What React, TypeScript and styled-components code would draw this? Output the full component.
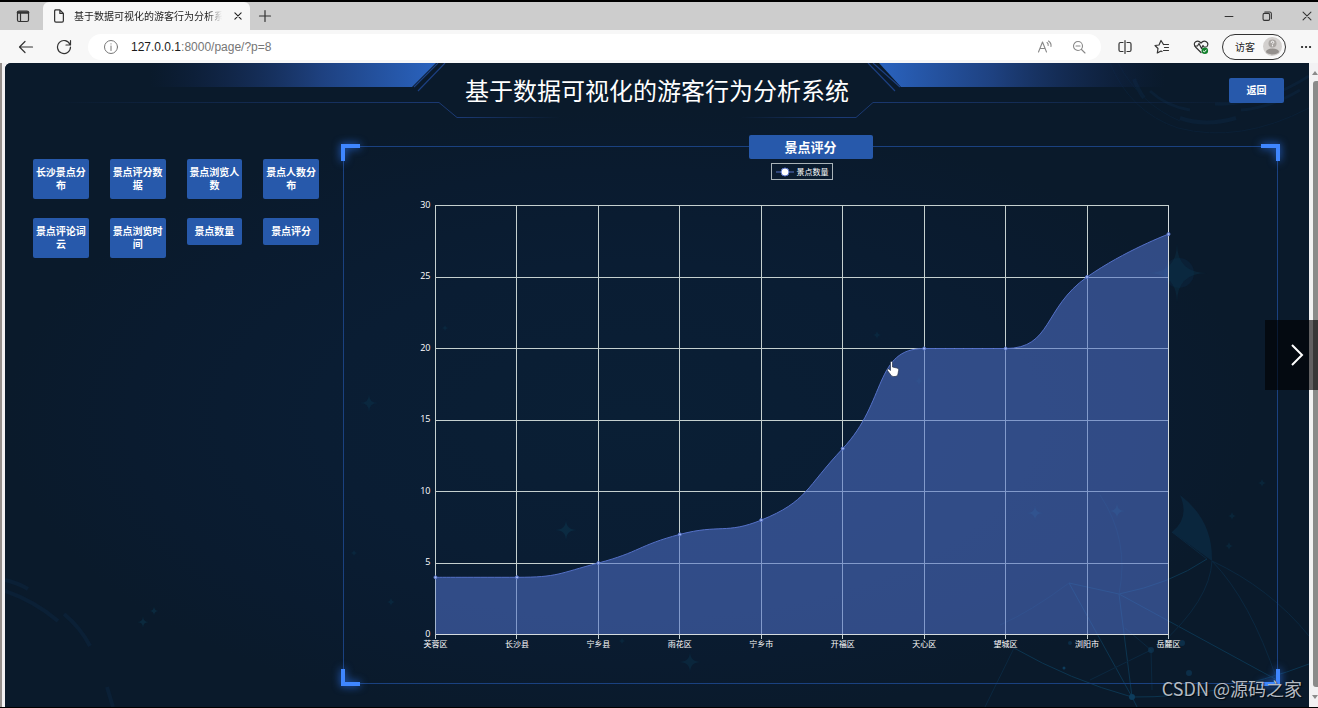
import React from "react";
import styled, { createGlobalStyle } from "styled-components";

const GlobalStyle = createGlobalStyle`
  *, *::before, *::after { box-sizing: border-box; }
  body {
    margin: 0;
    background: #000;
    font-family: "Open Sans", "Noto Sans CJK SC", sans-serif;
  }
  button { font-family: inherit; cursor: pointer; }
`;

/* ---------- browser window ---------- */

const Window = styled.div`
  position: relative;
  min-height: 100vh;
  display: flex;
  flex-direction: column;
  padding: 2px 0 1px;
  overflow: hidden;
`;

const TabStrip = styled.div`
  display: flex;
  align-items: stretch;
  height: 28px;
  padding-left: 2px;
  background: #cdcdcd;
`;

const IconButton = styled.button<{ $width: number }>`
  display: flex;
  align-items: center;
  justify-content: center;
  flex: none;
  width: ${(p) => p.$width}px;
  padding: 0;
  border: 0;
  background: transparent;
  color: #2b2b2b;
`;

const WindowControls = styled.div`
  display: flex;

  button:last-child {
    margin-left: 10px;
  }
`;

const Tab = styled.div`
  display: flex;
  align-items: center;
  gap: 8px;
  width: 207px;
  padding: 0 4px 0 9px;
  border-radius: 6px 6px 0 0;
  background: #f7f7f7;
`;

const TabTitle = styled.span`
  flex: 1;
  overflow: hidden;
  white-space: nowrap;
  font-size: 10px;
  line-height: 14px;
  color: #1c1c1c;
  mask-image: linear-gradient(to right, #000 90%, transparent);
`;

const Spacer = styled.div`
  flex: 1;
`;

const Toolbar = styled.div`
  display: flex;
  align-items: center;
  height: 33px;
  padding-left: 7px;
  background: #f7f7f7;
`;

const AddressBar = styled.div`
  display: flex;
  flex: 1;
  align-items: center;
  height: 26px;
  margin: 0 5px;
  padding: 0 5px 0 15px;
  border-radius: 13px;
  background: #fff;
`;

const Url = styled.div`
  flex: 1;
  padding-left: 12px;
  font-family: "Liberation Sans", sans-serif;
  font-size: 12px;
  line-height: 16px;
  color: #767676;

  b {
    font-weight: 400;
    color: #1c1c1c;
  }
`;

const Profile = styled.button`
  display: flex;
  align-items: center;
  justify-content: space-between;
  width: 64px;
  height: 26px;
  margin-right: 8px;
  padding: 0 3px 0 12px;
  border: 1px solid #333;
  border-radius: 13px;
  background: #f9f9f9;
  color: #1c1c1c;
  font-size: 10px;
  line-height: 14px;
`;

const Viewport = styled.div`
  display: flex;
  flex: 1;
  border-left: 2px solid #96908d;
  background: #f2f1f3;
`;

const ScrollTrack = styled.div`
  display: flex;
  flex-direction: column;
  align-items: flex-end;
  justify-content: space-between;
  width: 9px;
  padding: 7px 0;
`;

const ScrollThumb = styled.div`
  flex: 1;
  width: 5px;
  margin: 5px 0 7px;
  border-radius: 3px 0 0 3px;
  background: #8a8a8a;
`;

/* ---------- dashboard ---------- */

const Page = styled.div`
  position: relative;
  isolation: isolate;
  flex: 1;
  min-width: 0;
  margin-left: 3px;
  overflow: hidden;
  border-radius: 6px 0 0 0;
  background: #0a1a2b;
`;

const Backdrop = styled.svg`
  position: absolute;
  inset: 0;
  z-index: -1;
  width: 100%;
  height: 100%;
`;

const Header = styled.header`
  display: grid;
  grid-template-columns: 1fr auto 1fr;
  align-items: center;
  height: 55px;
  padding: 0 25px;
`;

const Title = styled.h1`
  grid-column: 2;
  margin: 0;
  font-size: 24px;
  font-weight: 400;
  line-height: 32px;
  color: #fff;
`;

const BlueButton = styled.button<{ $compact?: boolean }>`
  width: ${(p) => (p.$compact ? "55px" : "100%")};
  justify-self: end;
  padding: ${(p) => (p.$compact ? "6px 2px" : "7px 2px")};
  border: 0;
  border-radius: 2px;
  background: #2759ab;
  color: #fff;
  font-size: 10px;
  font-weight: 700;
  line-height: 13px;
`;

const Main = styled.main`
  display: flex;
  gap: 24px;
  padding: 28px 31px 23px 28px;
`;

const Menu = styled.nav`
  display: grid;
  flex: 0 0 286px;
  grid-template-columns: repeat(4, 1fr);
  gap: 19px 21px;
  align-content: start;
  align-items: start;
  padding-top: 13px;
`;

const Panel = styled.section`
  position: relative;
  display: flex;
  flex: 1;
  flex-direction: column;
  align-items: center;
  min-width: 0;
  border: 1px solid #1a4180;
`;

const Corner = styled.i<{ $v: "top" | "bottom"; $h: "left" | "right" }>`
  position: absolute;
  ${(p) => p.$v}: -3px;
  ${(p) => p.$h}: -3px;
  width: 19px;
  height: 17px;
  border: 0 solid #3f86ff;
  border-${(p) => p.$v}-width: 4px;
  border-${(p) => p.$h}-width: 4px;
  filter: drop-shadow(0 0 4px #2a6fe8);
`;

const PanelTitle = styled.h2`
  width: 124px;
  margin: -12px 0 4px;
  border-radius: 2px;
  background: #2759ab;
  color: #fff;
  font-size: 13px;
  font-weight: 700;
  line-height: 24px;
  text-align: center;
`;

const Legend = styled.div`
  display: flex;
  align-items: center;
  gap: 3px;
  height: 17px;
  margin-right: 18px;
  padding: 0 3px 0 4px;
  border: 1px solid #a9b3b8;
  color: #fff;
  font-size: 8px;
  line-height: 12px;
`;

const ChartSvg = styled.svg`
  display: block;
  width: 100%;
  height: auto;

  text {
    fill: #fff;
    font-size: 8px;
  }
  .value {
    font-size: 9px;
  }
`;

const NextButton = styled.button`
  position: absolute;
  top: calc(50% - 34px);
  right: 0;
  display: flex;
  align-items: center;
  justify-content: flex-end;
  width: 53px;
  height: 70px;
  padding: 0 13px 0 0;
  border: 0;
  background: rgba(0, 0, 0, 0.6);
`;

const Watermark = styled.div`
  position: absolute;
  right: 16px;
  bottom: 7px;
  color: #b4bac2;
  font-family: "Noto Sans CJK SC", sans-serif;
  font-size: 18px;
  font-weight: 400;
  line-height: 26px;
  text-shadow: 1px 1px 1px rgba(0, 0, 0, 0.7);
`;

/* ---------- icons ---------- */

type IconProps = {
  size?: number;
  color?: string;
  width?: number;
  children: React.ReactNode;
};

const Icon = ({ size = 16, color = "#333", width = 1.2, children }: IconProps) => (
  <svg
    width={size}
    height={size}
    viewBox="0 0 16 16"
    fill="none"
    stroke={color}
    strokeWidth={width}
    strokeLinecap="round"
    strokeLinejoin="round"
    aria-hidden="true"
  >
    {children}
  </svg>
);

/* ---------- chart ---------- */

const data = [
  { name: "芙蓉区", value: 4 },
  { name: "长沙县", value: 4 },
  { name: "宁乡县", value: 5 },
  { name: "雨花区", value: 7 },
  { name: "宁乡市", value: 8 },
  { name: "开福区", value: 13 },
  { name: "天心区", value: 20 },
  { name: "望城区", value: 20 },
  { name: "浏阳市", value: 25 },
  { name: "岳麓区", value: 28 },
];

const plot = { left: 91.5, right: 824.5, top: 25.5, bottom: 454.5, max: 30 };
const xAt = (i: number) => plot.left + ((plot.right - plot.left) * i) / (data.length - 1);
const yAt = (v: number) => plot.bottom - ((plot.bottom - plot.top) * v) / plot.max;
const between = (v: number, a: number, b: number) =>
  Math.max(Math.min(a, b), Math.min(Math.max(a, b), v));

type Point = [number, number];

/* Cubic curve whose control points never overshoot the neighbouring values. */
function smoothPath(points: Point[], smooth = 0.5) {
  let path = `M${points[0][0]} ${points[0][1]}`;
  let [c0x, c0y] = points[0];
  for (let i = 1; i < points.length; i++) {
    const [x, y] = points[i];
    const [px, py] = points[i - 1];
    let c1x = x;
    let c1y = y;
    let nextX = x;
    let nextY = y;
    if (i < points.length - 1) {
      const [nx, ny] = points[i + 1];
      const before = Math.hypot(x - px, y - py);
      const after = Math.hypot(nx - x, ny - y);
      const ratio = after / (after + before);
      nextX = between(x + (nx - px) * smooth * ratio, x, nx);
      nextY = between(y + (ny - py) * smooth * ratio, y, ny);
      c1x = between(x - ((nextX - x) * before) / after, px, x);
      c1y = between(y - ((nextY - y) * before) / after, py, y);
      nextX = x + ((x - c1x) * after) / before;
      nextY = y + ((y - c1y) * after) / before;
    }
    path += `C${c0x} ${c0y} ${c1x} ${c1y} ${x} ${y}`;
    c0x = nextX;
    c0y = nextY;
  }
  return path;
}

const points: Point[] = data.map((d, i) => [xAt(i), yAt(d.value)]);
const linePath = smoothPath(points);
const areaPath = `${linePath}V${plot.bottom}H${plot.left}Z`;

const Chart = () => (
  <ChartSvg viewBox="0 0 933 503" role="img" aria-label="景点数量">
    <g stroke="#c5d0cf" strokeWidth="1" shapeRendering="crispEdges">
      {[0, 5, 10, 15, 20, 25, 30].map((v) => (
        <line key={v} x1={plot.left - 1} x2={plot.right} y1={yAt(v)} y2={yAt(v)} />
      ))}
      {data.map((d, i) => (
        <line key={i} x1={xAt(i)} x2={xAt(i)} y1={plot.top} y2={plot.bottom + 4} />
      ))}
    </g>
    <path d={areaPath} fill="#4f70c8" fillOpacity="0.57" />
    <path d={linePath} fill="none" stroke="#5470c6" strokeWidth="1" />
    <path
      d={`M${plot.left} ${plot.bottom}H${plot.right}V${plot.top}`}
      fill="none"
      stroke="#d5dcdf"
      shapeRendering="crispEdges"
    />
    {points.map(([x, y], i) => (
      <circle key={i} cx={x} cy={y} r="1.5" fill="#a9bdf2" stroke="#5470c6" />
    ))}
    {[0, 5, 10, 15, 20, 25, 30].map((v) => (
      <text key={v} className="value" x={plot.left - 5} y={yAt(v) + 2} textAnchor="end">
        {v}
      </text>
    ))}
    {data.map((d, i) => (
      <text key={i} x={xAt(i)} y={plot.bottom + 12} textAnchor="middle">
        {d.name}
      </text>
    ))}
    <path
      d="M546.5 182.500c0-1.500 2-1.500 2 0v4.500l4.500 1c1.500.4 1.800 1.200 1.600 2.500l-.6 3.500c-.4 1.800-1.500 2.500-3 2.500h-1.500c-1.300 0-2-.5-2.700-1.500l-3.300-4.500c-.7-1.200.6-2 1.500-1.300l1.500 1.300z"
      fill="#fff"
      stroke="#26324a"
      strokeWidth="0.700"
    />
  </ChartSvg>
);

/* ---------- backdrop ---------- */

const sparkles: [number, number, number, number][] = [
  [1177, 273, 30, 0.35],
  [566, 530, 11, 0.5],
  [369, 403, 9, 0.4],
  [690, 662, 11, 0.4],
  [143, 622, 6, 0.5],
  [154, 611, 5, 0.5],
  [1035, 513, 8, 0.6],
  [1117, 511, 8, 0.6],
  [1262, 483, 5, 0.4],
  [1232, 516, 5, 0.4],
  [1229, 546, 5, 0.4],
  [877, 335, 5, 0.4],
  [919, 381, 5, 0.4],
  [391, 602, 5, 0.4],
  [354, 553, 4, 0.4],
  [445, 328, 4, 0.4],
  [622, 641, 4, 0.4],
];

const Scenery = () => (
  <Backdrop viewBox="5 63 1304 644" preserveAspectRatio="xMidYMin slice" aria-hidden="true">
    <defs>
      <radialGradient id="halo" cx="0.480" cy="0.550" r="0.480">
        <stop offset="0" stopColor="#0a1f35" />
        <stop offset="0.500" stopColor="#0a1d33" />
        <stop offset="0.800" stopColor="#0a1b2f" />
        <stop offset="1" stopColor="#0a1a2b" />
      </radialGradient>
      <linearGradient id="bandLeft" gradientUnits="userSpaceOnUse" x1="150" x2="436" y1="0" y2="0">
        <stop offset="0" stopColor="#102349" stopOpacity="0" />
        <stop offset="0.250" stopColor="#142b55" stopOpacity="0.6" />
        <stop offset="0.600" stopColor="#1e4180" />
        <stop offset="1" stopColor="#2a63bf" />
      </linearGradient>
      <linearGradient id="bandRight" gradientUnits="userSpaceOnUse" x1="879" x2="1165" y1="0" y2="0">
        <stop offset="0" stopColor="#2a63bf" />
        <stop offset="0.400" stopColor="#1e4180" />
        <stop offset="0.750" stopColor="#142b55" stopOpacity="0.6" />
        <stop offset="1" stopColor="#102349" stopOpacity="0" />
      </linearGradient>
      <linearGradient id="ruleLeft" gradientUnits="userSpaceOnUse" x1="50" x2="560" y1="0" y2="0">
        <stop offset="0" stopColor="#1b3a75" stopOpacity="0" />
        <stop offset="0.800" stopColor="#1b3a75" />
        <stop offset="1" stopColor="#1b3a75" stopOpacity="0" />
      </linearGradient>
      <linearGradient id="ruleRight" gradientUnits="userSpaceOnUse" x1="740" x2="1250" y1="0" y2="0">
        <stop offset="0" stopColor="#1b3a75" stopOpacity="0" />
        <stop offset="0.200" stopColor="#1b3a75" />
        <stop offset="1" stopColor="#1b3a75" stopOpacity="0" />
      </linearGradient>
    </defs>
    <rect x="5" y="63" width="1304" height="644" fill="url(#halo)" />

    <g fill="none" stroke="#0b2036" strokeWidth="4">
      <path d="M1134 79Q1138 90 1144 98M1180 118Q1205 127 1236 118" />
      <path d="M1150 91Q1166 106 1190 110M1241 110Q1270 108 1300 90M1215 104Q1262 106 1309 76" strokeWidth="3" />
      <path d="M1110 63Q1130 112 1178 128Q1240 144 1309 108M1118 63Q1140 104 1180 121" strokeWidth="1" />
      <path d="M5 580Q18 583 28 589M5 591Q34 601 58 621M64 614Q80 627 90 646M107 687L113 707" />
    </g>

    <path d="M60 63H436L412 87H60Z" fill="url(#bandLeft)" />
    <path d="M879 63H1200V87H901Z" fill="url(#bandRight)" />
    <path
      d="M438 63L414 87M445 63L418 91M873 63L900 87M868 63L895 91"
      fill="none"
      stroke="#1c3f80"
      strokeWidth="1.200"
    />
    <path d="M50 102.500H439L457 117.500H560" fill="none" stroke="url(#ruleLeft)" />
    <path d="M1250 102.500H873L856 117.500H740" fill="none" stroke="url(#ruleRight)" />

    <path d="M1180 495Q1213 520 1212 561L1172 532Q1190 518 1180 495Z" fill="#0a263d" />
    <g fill="none" stroke="#0c3550" strokeWidth="1">
      <path d="M1014 648Q1070 680 1132 697L1119 594L1277 680M1132 697L1069 583L1119 594Q1170 584 1207 559" />
      <path d="M1132 697Q1220 698 1309 664M1132 697L1137 707" />
      <path
        d="M1069 583Q1030 612 1000 625M1212 561Q1250 600 1277 680M1212 561Q1270 588 1309 636M1119 594Q1130 540 1100 495M1212 561Q1210 600 1160 645"
        stroke="#0b2840"
      />
      <path
        d="M1014 648L985 707M1151 650L1090 680M1151 650L1152 690M1151 650L1125 628M1207 559L1172 532"
        stroke="#0b2840"
      />
    </g>
    <g fill="#0d3c5c">
      <circle cx="1132" cy="697" r="3" />
      <circle cx="1151" cy="650" r="3" opacity="0.600" />
      <circle cx="1189" cy="673" r="3" opacity="0.600" />
      <circle cx="1182" cy="643" r="3" opacity="0.600" />
      <circle cx="1070" cy="643" r="2" opacity="0.600" />
      <circle cx="1064" cy="668" r="1.500" />
    </g>
    <circle cx="1179" cy="273" r="15" fill="#0a2036" />
    {sparkles.map(([x, y, r, opacity], i) => (
      <path
        key={i}
        d={`M${x} ${y - r}Q${x} ${y} ${x + r} ${y}Q${x} ${y} ${x} ${y + r}Q${x} ${y} ${x - r} ${y}Q${x} ${y} ${x} ${y - r}Z`}
        fill="#0b3850"
        opacity={opacity}
      />
    ))}
  </Backdrop>
);

const menuItems = [
  "长沙景点分布",
  "景点评分数据",
  "景点浏览人数",
  "景点人数分布",
  "景点评论词云",
  "景点浏览时间",
  "景点数量",
  "景点评分",
];

export default function App() {
  return (
    <Window>
      <GlobalStyle />
      <TabStrip>
        <IconButton $width={41} aria-label="标签页操作">
          <Icon>
            <rect x="2.500" y="3" width="11" height="10.500" rx="1.500" />
            <path d="M3 4.500h10" strokeWidth="2.500" />
            <path d="M5.500 5v8" />
          </Icon>
        </IconButton>
        <Tab>
          <Icon size={14} width={1.4}>
            <path d="M3.500 1h5.500l4 4v8.500q0 1.500-1.500 1.500h-7q-1.500 0-1.500-1.500v-11q0-1.500 1.500-1.500zM9 1v4h4" />
          </Icon>
          <TabTitle>基于数据可视化的游客行为分析系统</TabTitle>
          <IconButton $width={16} aria-label="关闭标签页">
            <Icon size={10} color="#222" width={1.8}>
              <path d="M3 3l10 10M13 3L3 13" />
            </Icon>
          </IconButton>
        </Tab>
        <IconButton $width={29} aria-label="新建标签页">
          <Icon>
            <path d="M8 2.500v11M2.500 8h11" />
          </Icon>
        </IconButton>
        <Spacer />
        <WindowControls>
          <IconButton $width={39} aria-label="最小化">
            <Icon size={14}>
              <path d="M3.500 8.500h9" />
            </Icon>
          </IconButton>
          <IconButton $width={38} aria-label="还原">
            <Icon size={14}>
              <rect x="3.500" y="5" width="7.500" height="8" rx="1.500" />
              <path d="M5.500 3.500h5.500q2 0 2 2v5.500" />
            </Icon>
          </IconButton>
          <IconButton $width={22} aria-label="关闭">
            <Icon size={14}>
              <path d="M3.500 3.500l9 9M12.500 3.500l-9 9" />
            </Icon>
          </IconButton>
        </WindowControls>
      </TabStrip>

      <Toolbar>
        <IconButton $width={38} aria-label="返回上一页">
          <Icon>
            <path d="M14.500 8H1.500M7 2.500L1.500 8L7 13.500" />
          </Icon>
        </IconButton>
        <IconButton $width={38} aria-label="刷新">
          <Icon>
            <path d="M14 5.500A6.500 6.500 0 1 0 14.500 8M14.500 1.500v4.500h-4.500" />
          </Icon>
        </IconButton>
        <AddressBar>
          <Icon color="#777" width={1}>
            <circle cx="8" cy="8" r="6.500" />
            <path d="M8 7v4.500M8 4.800v.2" />
          </Icon>
          <Url>
            <b>127.0.0.1</b>:8000/page/?p=8
          </Url>
          <IconButton $width={34} aria-label="朗读此页">
            <Icon color="#888" width={1.1}>
              <path d="M1.500 13L5.500 3L9.500 13M3 9.500h5M10 3.500q1.500 1 1.200 3M11.500 2q3 2 2.500 5.500" />
            </Icon>
          </IconButton>
          <IconButton $width={34} aria-label="缩小">
            <Icon color="#888" width={1.1}>
              <circle cx="7" cy="7" r="4.500" />
              <path d="M10.500 10.500l3.500 3.500M5 7h4" />
            </Icon>
          </IconButton>
        </AddressBar>
        <IconButton $width={38} aria-label="分屏">
          <Icon>
            <path d="M6 3.500h-2.500q-1.500 0-1.500 1.500v6q0 1.500 1.500 1.500h2.500M10 3.500h2.500q1.500 0 1.500 1.500v6q0 1.500-1.500 1.500h-2.500M8 1.500v13" />
          </Icon>
        </IconButton>
        <IconButton $width={36} aria-label="收藏夹">
          <Icon>
            <path d="M9.500 5.500L7 1.500L5 6L1 6.500L4 9.500L3.300 14L7 12L8 12.500M9.500 5.500h5M10.500 8.500h4M9.500 11.500h5" />
          </Icon>
        </IconButton>
        <IconButton $width={42} aria-label="浏览器概要">
          <Icon>
            <path d="M8 13.500L2.500 8Q0 4.500 2.700 2.700Q5.500 1 8 4Q10.500 1 13.300 2.700Q16 4.500 14 7.500M1.500 7h3l1.500-2.500l2.500 5l1.500-3l1 1.500h2" />
            <circle cx="11.800" cy="11.800" r="3.300" fill="#12802c" stroke="none" />
            <path d="M10.300 12l1.100 1l1.800-2" stroke="#fff" strokeWidth="1" />
          </Icon>
        </IconButton>
        <Profile>
          访客
          <svg width="19" height="19" viewBox="0 0 19 19" aria-hidden="true">
            <circle cx="9.500" cy="9.500" r="9.500" fill="#d3d0ce" />
            <circle cx="9.500" cy="6.500" r="4" fill="#aaa6a3" />
            <ellipse cx="9.500" cy="14.500" rx="6.500" ry="3" fill="#94908d" />
            <path d="M8.200 5.500q0-1.300 1.300-1.300t1.300 1.200q0 .8-1.300 1.600M9.500 8.600v.3" fill="none" stroke="#fff" strokeLinecap="round" />
          </svg>
        </Profile>
        <IconButton $width={24} aria-label="设置及其他">
          <Icon color="#222">
            <path d="M4 8h.1M8 8h.1M12 8h.1" strokeWidth="2.200" />
          </Icon>
        </IconButton>
      </Toolbar>

      <Viewport>
        <Page>
          <Scenery />
          <Header>
            <Title>基于数据可视化的游客行为分析系统</Title>
            <BlueButton $compact>返回</BlueButton>
          </Header>
          <Main>
            <Menu>
              {menuItems.map((item) => (
                <BlueButton key={item}>{item}</BlueButton>
              ))}
            </Menu>
            <Panel>
              <Corner $v="top" $h="left" />
              <Corner $v="top" $h="right" />
              <Corner $v="bottom" $h="left" />
              <Corner $v="bottom" $h="right" />
              <PanelTitle>景点评分</PanelTitle>
              <Legend>
                <svg width="18" height="10" viewBox="0 0 18 10" aria-hidden="true">
                  <path d="M0 5h18" stroke="#5470c6" />
                  <circle cx="9" cy="5" r="4" fill="#fff" stroke="#5470c6" />
                </svg>
                景点数量
              </Legend>
              <Chart />
            </Panel>
          </Main>
        </Page>
        <ScrollTrack>
          <svg width="6" height="6" viewBox="0 0 6 6" aria-hidden="true">
            <path d="M0 5L3 1L6 5Z" fill="#8a8a8a" />
          </svg>
          <ScrollThumb />
          <svg width="6" height="6" viewBox="0 0 6 6" aria-hidden="true">
            <path d="M0 1L3 5L6 1Z" fill="#8a8a8a" />
          </svg>
        </ScrollTrack>
      </Viewport>

      <NextButton aria-label="下一张">
        <svg width="17" height="26" viewBox="0 0 17 26" aria-hidden="true">
          <path d="M4 3L14 13L4 23" fill="none" stroke="#fff" strokeWidth="2" />
        </svg>
      </NextButton>
      <Watermark>CSDN @源码之家</Watermark>
    </Window>
  );
}
